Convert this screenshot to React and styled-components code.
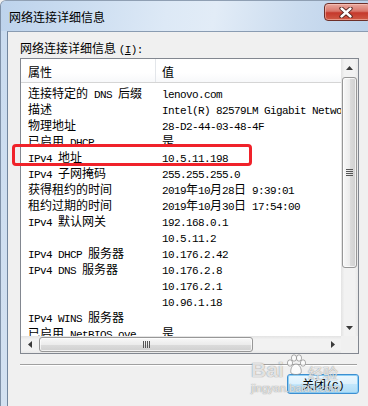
import React from 'react';
import styled, { createGlobalStyle } from 'styled-components';

const CJK = `"Noto Sans CJK SC", "Microsoft YaHei", sans-serif`;

const Global = createGlobalStyle`
  html, body { margin: 0; padding: 0; background: #f0f0f0; }
  body { width: 368px; height: 406px; overflow: hidden; }
`;

const Window = styled.div`
  position: relative;
  width: 368px;
  height: 406px;
  box-sizing: border-box;
  display: flex;
  flex-direction: column;
  background: linear-gradient(180deg, #c9dbef 0%, #d3e1f1 100%);
  border-left: 1px solid #7f91a8;
  border-top: 1px solid #8f9fb3;
  border-top-left-radius: 6px;
  overflow: hidden;
  font-family: ${CJK};
  color: #000;
`;

const TitleBar = styled.div`
  height: 30px;
  flex: none;
  display: flex;
  justify-content: space-between;
  padding-left: 8px;
  background: linear-gradient(100deg, #bdd3ec 0%, #cadcf0 20%, #dde9f6 45%, #e2ecf7 58%, #cbdcef 80%, #bcd1ea 100%);
`;

const Title = styled.div`
  font-size: 12px;
  line-height: 16px;
  margin-top: 8px;
  letter-spacing: 0;
`;

const CloseBtn = styled.div`
  width: 47px;
  height: 18px;
  margin-top: 2px;
  margin-right: -3px;
  box-sizing: border-box;
  border: 1px solid #6d2f29;
  border-radius: 4px;
  background: linear-gradient(180deg, #e9a99f 0%, #d9776b 45%, #c5392c 55%, #cf5a45 100%);
  box-shadow: inset 0 0 0 1px rgba(255, 210, 200, 0.5);
  display: flex;
  align-items: center;
  justify-content: center;
  padding-right: 4px;
`;

const Body = styled.div`
  flex: 1;
  display: flex;
  padding-left: 6px;
`;

const Client = styled.div`
  flex: 1;
  position: relative;
  background: #f0f0f0;
  border-left: 1px solid #72869e;
  border-top: 1px solid #8a9cb2;
  padding: 8px 9px 0 12px;
  display: flex;
  flex-direction: column;
`;

const GroupLabel = styled.div`
  font-size: 12px;
  line-height: 16px;
  height: 16px;
  margin-bottom: 2px;
  white-space: pre;
`;

const Latin = styled.span`
  font-family: "Liberation Mono", monospace;
  font-size: 11px;
  letter-spacing: -0.6px;
  text-decoration: ${(p) => (p.$u ? 'underline' : 'none')};
`;

const ListView = styled.div`
  width: 339px;
  height: 296px;
  box-sizing: border-box;
  border: 1px solid #828790;
  background: #fff;
  display: grid;
  grid-template-columns: 320px 17px;
  grid-template-rows: 277px 17px;
`;

const Content = styled.div`
  overflow: hidden;
  display: flex;
  flex-direction: column;
`;

const Header = styled.div`
  height: 24px;
  flex: none;
  box-sizing: border-box;
  display: grid;
  grid-template-columns: 135px 1fr;
  border-bottom: 1px solid #d5d5d5;
  background: linear-gradient(180deg, #ffffff 0%, #ffffff 60%, #f7f8fa 100%);
`;

const HeaderCell = styled.div`
  font-size: 12px;
  line-height: 16px;
  padding: 5px 0 0 ${(p) => p.$pad}px;
  border-right: ${(p) => (p.$div ? '1px solid #e3e6ea' : 'none')};
`;

const Rows = styled.div`
  padding-top: 2px;
`;

const Row = styled.div`
  display: grid;
  grid-template-columns: 135px 1fr;
  height: 16px;
  line-height: 16px;
  font-size: 12px;
  white-space: pre;
`;

const Cell = styled.div`
  overflow: hidden;
  padding-left: ${(p) => p.$pad}px;
`;

const VScroll = styled.div`
  display: flex;
  flex-direction: column;
  background: linear-gradient(90deg, #e3e3e3 0%, #f2f2f2 20%, #f2f2f2 80%, #e8e8e8 100%);
`;

const HScroll = styled.div`
  display: flex;
  background: linear-gradient(180deg, #e3e3e3 0%, #f2f2f2 20%, #f2f2f2 80%, #e8e8e8 100%);
`;

const ArrowBtn = styled.div`
  width: 17px;
  height: 17px;
  flex: none;
  display: flex;
  align-items: center;
  justify-content: center;
`;

const Track = styled.div`
  flex: 1;
  display: flex;
  flex-direction: ${(p) => (p.$vertical ? 'column' : 'row')};
`;

const Thumb = styled.div`
  box-sizing: border-box;
  width: ${(p) => (p.$vertical ? '15px' : `${p.$len}px`)};
  height: ${(p) => (p.$vertical ? `${p.$len}px` : '15px')};
  margin: 1px 0 0 1px;
  border: 1px solid #979797;
  border-radius: 3px;
  background: ${(p) =>
    p.$vertical
      ? 'linear-gradient(90deg, #f8f8f8 0%, #ececec 50%, #dcdcdc 51%, #d0d0d0 100%)'
      : 'linear-gradient(180deg, #f8f8f8 0%, #ececec 50%, #dcdcdc 51%, #d0d0d0 100%)'};
  box-shadow: inset 0 0 0 1px rgba(255, 255, 255, 0.7);
  display: flex;
  align-items: center;
  justify-content: center;
`;

const Corner = styled.div`
  background: #f0f0f0;
`;

const Separator = styled.div`
  width: 337px;
  margin-top: 10px;
  border-top: 1px solid #a0a0a0;
  border-bottom: 1px solid #ffffff;
`;

const ButtonRow = styled.div`
  display: flex;
  justify-content: flex-end;
  margin-top: 8px;
`;

const Button = styled.div`
  width: 72px;
  height: 20px;
  box-sizing: border-box;
  border: 1px solid #3c8fd1;
  border-radius: 3px;
  background: linear-gradient(180deg, #ecf7fe 0%, #dcf1fd 48%, #c3e7fc 52%, #b0dcf5 100%);
  box-shadow: inset 0 0 0 1px #8fd0f6;
  font-size: 12px;
  line-height: 17px;
  text-align: center;
  white-space: pre;
`;

const Highlight = styled.div`
  position: absolute;
  left: 11px;
  top: 143px;
  width: 240px;
  height: 22px;
  box-sizing: border-box;
  border: 3px solid #f0222a;
  border-radius: 4px;
  pointer-events: none;
`;

const Watermark = styled.div`
  position: absolute;
  left: 250px;
  top: 351px;
  display: flex;
  flex-direction: column;
  align-items: flex-start;
  color: rgba(255, 255, 255, 0.75);
  text-shadow: 0 0 1px rgba(110, 110, 110, 0.55), 0 0 1px rgba(110, 110, 110, 0.55);
  pointer-events: none;
`;

const WmTop = styled.div`
  display: flex;
  align-items: flex-end;
  height: 30px;
`;

const WmBai = styled.span`
  font-family: "Liberation Sans", sans-serif;
  font-weight: bold;
  font-size: 21px;
  line-height: 24px;
`;

const WmJy = styled.span`
  font-size: 15px;
  line-height: 18px;
  margin-left: 1px;
`;

const WmUrl = styled.span`
  font-family: "Liberation Sans", sans-serif;
  font-size: 11px;
  line-height: 12px;
`;

const isAscii = (r) => /^[\x00-\x7f]/.test(r);

const Txt = ({ s }) =>
  (s.match(/[\x00-\x7f]+|[^\x00-\x7f]+/g) || []).map((r, i) =>
    isAscii(r) ? <Latin key={i}>{r}</Latin> : <span key={i}>{r}</span>
  );

const rows = [
  ['连接特定的 DNS 后缀', 'lenovo.com'],
  ['描述', 'Intel(R) 82579LM Gigabit Network Connection'],
  ['物理地址', '28-D2-44-03-48-4F'],
  ['已启用 DHCP', '是'],
  ['IPv4 地址', '10.5.11.198'],
  ['IPv4 子网掩码', '255.255.255.0'],
  ['获得租约的时间', '2019年10月28日 9:39:01'],
  ['租约过期的时间', '2019年10月30日 17:54:00'],
  ['IPv4 默认网关', '192.168.0.1'],
  ['', '10.5.11.2'],
  ['IPv4 DHCP 服务器', '10.176.2.42'],
  ['IPv4 DNS 服务器', '10.176.2.8'],
  ['', '10.176.2.1'],
  ['', '10.96.1.18'],
  ['IPv4 WINS 服务器', ''],
  ['已启用 NetBIOS ove...', '是'],
];

const Arrow = ({ dir }) => {
  const pts = {
    up: '0,4 3.5,0 7,4',
    down: '0,0 7,0 3.5,4',
    left: '4,0 4,7 0,3.5',
    right: '0,0 0,7 4,3.5',
  }[dir];
  const vert = dir === 'up' || dir === 'down';
  return (
    <svg width={vert ? 7 : 4} height={vert ? 4 : 7} viewBox={vert ? '0 0 7 4' : '0 0 4 7'}>
      <polygon points={pts} fill="#3a3a3a" />
    </svg>
  );
};

const Grip = ({ vertical }) => (
  <svg width={vertical ? 7 : 7} height={7} viewBox="0 0 7 7">
    {[0, 2, 4, 6].map((o) =>
      vertical ? (
        <line key={o} x1="0" y1={o + 0.5} x2="7" y2={o + 0.5} stroke="#555" strokeWidth="1" />
      ) : (
        <line key={o} x1={o + 0.5} y1="0" x2={o + 0.5} y2="7" stroke="#555" strokeWidth="1" />
      )
    )}
  </svg>
);

const CloseX = () => (
  <svg width="14" height="11" viewBox="0 0 14 11">
    <path d="M2.5 1.5 L11.5 9.5 M11.5 1.5 L2.5 9.5" stroke="#4a1e19" strokeWidth="4.2" strokeLinecap="round" />
    <path d="M2.5 1.5 L11.5 9.5 M11.5 1.5 L2.5 9.5" stroke="#ffffff" strokeWidth="2.4" strokeLinecap="round" />
  </svg>
);

const Paw = () => (
  <svg width="20" height="22" viewBox="0 0 20 22" style={{ margin: '0 1px 6px 2px' }}>
    <g fill="rgba(255,255,255,0.75)" stroke="rgba(110,110,110,0.55)" strokeWidth="1">
      <ellipse cx="4" cy="9" rx="2.6" ry="3.2" />
      <ellipse cx="8" cy="4" rx="2.6" ry="3.2" />
      <ellipse cx="13" cy="4" rx="2.6" ry="3.2" />
      <ellipse cx="17" cy="9" rx="2.6" ry="3.2" />
      <path d="M10 10 C6 10 4 16 5 19 C7 21 13 21 15 19 C16 16 14 10 10 10 Z" />
    </g>
  </svg>
);

export default function App() {
  return (
    <>
      <Global />
      <Window>
        <TitleBar>
          <Title>网络连接详细信息</Title>
          <CloseBtn>
            <CloseX />
          </CloseBtn>
        </TitleBar>
        <Body>
          <Client>
            <GroupLabel>
              网络连接详细信息 <Latin>(</Latin>
              <Latin $u>I</Latin>
              <Latin>):</Latin>
            </GroupLabel>
            <ListView>
              <Content>
                <Header>
                  <HeaderCell $pad={7} $div>属性</HeaderCell>
                  <HeaderCell $pad={6}>值</HeaderCell>
                </Header>
                <Rows>
                  {rows.map(([k, v], i) => (
                    <Row key={i}>
                      <Cell $pad={7}>
                        <Txt s={k} />
                      </Cell>
                      <Cell $pad={6}>
                        <Txt s={v} />
                      </Cell>
                    </Row>
                  ))}
                </Rows>
              </Content>
              <VScroll>
                <ArrowBtn>
                  <Arrow dir="up" />
                </ArrowBtn>
                <Track $vertical>
                  <Thumb $vertical $len={191}>
                    <Grip vertical />
                  </Thumb>
                </Track>
                <ArrowBtn>
                  <Arrow dir="down" />
                </ArrowBtn>
              </VScroll>
              <HScroll>
                <ArrowBtn>
                  <Arrow dir="left" />
                </ArrowBtn>
                <Track>
                  <Thumb $len={214}>
                    <Grip />
                  </Thumb>
                </Track>
                <ArrowBtn>
                  <Arrow dir="right" />
                </ArrowBtn>
              </HScroll>
              <Corner />
            </ListView>
            <Separator />
            <ButtonRow>
              <Button>
                关闭<Latin>(C)</Latin>
              </Button>
            </ButtonRow>
          </Client>
        </Body>
        <Highlight />
        <Watermark>
          <WmTop>
            <WmBai>Bai</WmBai>
            <Paw />
            <WmJy>经验</WmJy>
          </WmTop>
          <WmUrl>jingyan.baidu.com</WmUrl>
        </Watermark>
      </Window>
    </>
  );
}
